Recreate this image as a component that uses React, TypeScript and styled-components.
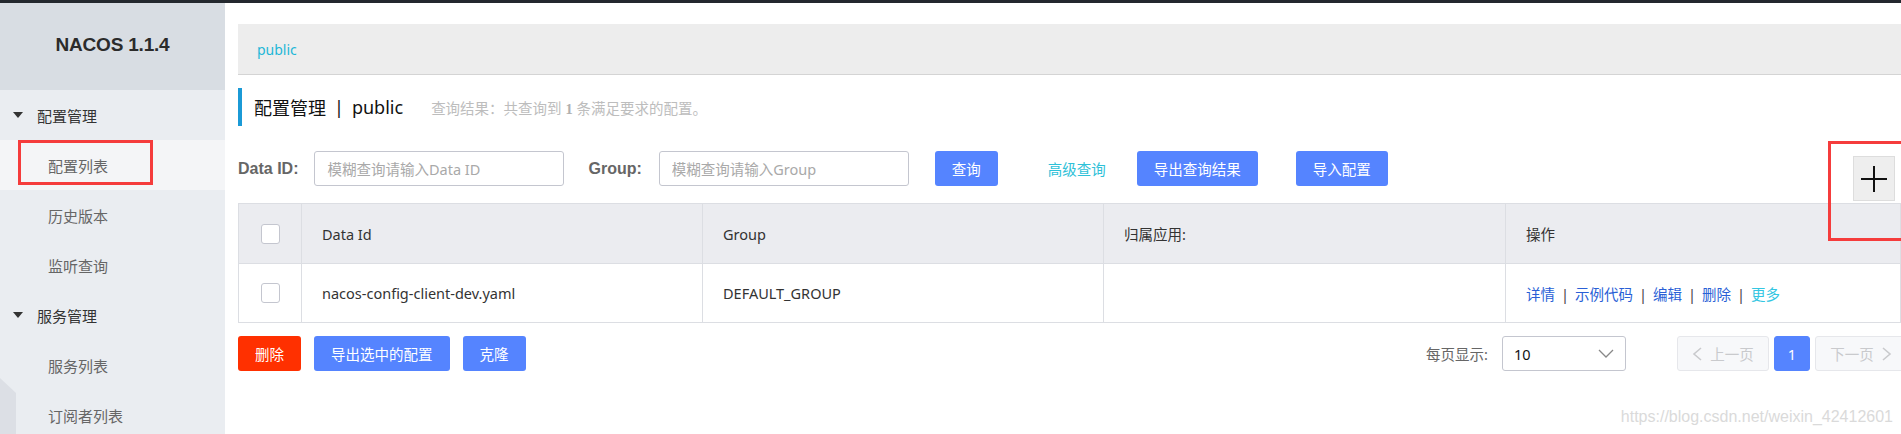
import styled, { createGlobalStyle } from "styled-components";

const GlobalStyle = createGlobalStyle`
  * { box-sizing: border-box; }
  html, body {
    margin: 0;
    padding: 0;
    width: 1901px;
    height: 434px;
    overflow: hidden;
    background: #fff;
  }
  body {
    font-family: "Noto Sans", "Noto Sans CJK SC", sans-serif;
    color: #333;
  }
`;

const subMenus = [
  { title: "配置管理", items: ["配置列表", "历史版本", "监听查询"] },
  { title: "服务管理", items: ["服务列表", "订阅者列表"] },
];

const columns = ["Data Id", "Group", "归属应用:", "操作"];

const actions = ["详情", "示例代码", "编辑", "删除"];

const App = () => {
  return (
    <Page>
      <GlobalStyle />
      <TopBar />
      <Body>
        <Sidebar>
          <SideHeader>NACOS 1.1.4</SideHeader>
          {subMenus.map((group) => (
            <div key={group.title}>
              <MenuGroup>
                <Caret />
                {group.title}
              </MenuGroup>
              {group.items.map((item) => (
                <MenuItem key={item} $active={item === "配置列表"}>
                  {item}
                  {item === "配置列表" && <MarkBox $w={135} $h={45} />}
                </MenuItem>
              ))}
            </div>
          ))}
          <CollapseTab />
        </Sidebar>

        <Main>
          <Breadcrumb>public</Breadcrumb>

          <TitleRow>
            <TitleText>配置管理</TitleText>
            <TitleSep>|</TitleSep>
            <TitleText>public</TitleText>
            <ResultText>
              查询结果：共查询到 <b>1</b> 条满足要求的配置。
            </ResultText>
          </TitleRow>

          <SearchRow>
            <FieldLabel>Data ID:</FieldLabel>
            <SearchInput $ml={16} placeholder="模糊查询请输入Data ID" />
            <FieldLabel $ml={24}>Group:</FieldLabel>
            <SearchInput $ml={17} placeholder="模糊查询请输入Group" />
            <Button $ml={26}>查询</Button>
            <TextLink $ml={50}>高级查询</TextLink>
            <Button $ml={31}>导出查询结果</Button>
            <Button $ml={38}>导入配置</Button>
          </SearchRow>

          <PlusButton>
            <svg width="26" height="26" viewBox="0 0 26 26">
              <line x1="13" y1="0" x2="13" y2="26" stroke="#111" strokeWidth="2" />
              <line x1="0" y1="13" x2="26" y2="13" stroke="#111" strokeWidth="2" />
            </svg>
          </PlusButton>
          <PlusMark />

          <Table>
            <colgroup>
              <col style={{ width: 63 }} />
              <col style={{ width: 401 }} />
              <col style={{ width: 401 }} />
              <col style={{ width: 402 }} />
              <col />
            </colgroup>
            <thead>
              <tr>
                <HeadCell $center>
                  <Checkbox />
                </HeadCell>
                {columns.map((c) => (
                  <HeadCell key={c}>{c}</HeadCell>
                ))}
              </tr>
            </thead>
            <tbody>
              <tr>
                <Cell $center>
                  <Checkbox />
                </Cell>
                <Cell>nacos-config-client-dev.yaml</Cell>
                <Cell>DEFAULT_GROUP</Cell>
                <Cell />
                <Cell>
                  {actions.map((a) => (
                    <span key={a}>
                      <ActionLink>{a}</ActionLink>
                      <ActionSep>|</ActionSep>
                    </span>
                  ))}
                  <ActionLink $more>更多</ActionLink>
                </Cell>
              </tr>
            </tbody>
          </Table>

          <Footer>
            <FooterLeft>
              <Button $variant="danger">删除</Button>
              <Button>导出选中的配置</Button>
              <Button>克隆</Button>
            </FooterLeft>
            <FooterRight>
              <PageSizeLabel>每页显示:</PageSizeLabel>
              <Select>
                <span>10</span>
                <svg width="16" height="9" viewBox="0 0 16 9">
                  <polyline points="1,1 8,8 15,1" fill="none" stroke="#888" strokeWidth="1.3" />
                </svg>
              </Select>
              <Pager>
                <PageButton $ml={51} $w={92} disabled>
                  <svg width="10" height="14" viewBox="0 0 10 14">
                    <polyline points="9,1 2,7 9,13" fill="none" stroke="#c9cacd" strokeWidth="1.6" />
                  </svg>
                  上一页
                </PageButton>
                <PageButton $ml={5} $w={36} $current>
                  1
                </PageButton>
                <PageButton $ml={5} $w={92} disabled>
                  下一页
                  <svg width="10" height="14" viewBox="0 0 10 14">
                    <polyline points="1,1 8,7 1,13" fill="none" stroke="#c9cacd" strokeWidth="1.6" />
                  </svg>
                </PageButton>
              </Pager>
            </FooterRight>
          </Footer>
        </Main>
      </Body>
      <Watermark>https://blog.csdn.net/weixin_42412601</Watermark>
    </Page>
  );
};

const Page = styled.div`
  position: relative;
  width: 1901px;
  height: 434px;
  display: flex;
  flex-direction: column;
  overflow: hidden;
`;

const TopBar = styled.div`
  height: 3px;
  background: #23282e;
  flex-shrink: 0;
`;

const Body = styled.div`
  flex: 1;
  display: flex;
  min-height: 0;
`;

const Sidebar = styled.aside`
  position: relative;
  width: 225px;
  flex-shrink: 0;
  background: #eaedf1;
  overflow: hidden;
`;

const SideHeader = styled.div`
  height: 87px;
  background: #d8dde3;
  display: flex;
  align-items: center;
  justify-content: center;
  padding-bottom: 3px;
  font-family: "Liberation Sans", Arial, sans-serif;
  font-weight: bold;
  font-size: 19px;
  letter-spacing: -0.2px;
  color: #2b2b2b;
`;

const MenuGroup = styled.div`
  height: 50px;
  display: flex;
  align-items: center;
  padding-left: 13px;
  font-size: 15px;
  color: #333;
`;

const Caret = styled.span`
  width: 0;
  height: 0;
  border-left: 5.5px solid transparent;
  border-right: 5.5px solid transparent;
  border-top: 6px solid #333;
  margin-right: 14px;
`;

const MenuItem = styled.div<{ $active?: boolean }>`
  position: relative;
  height: 50px;
  display: flex;
  align-items: center;
  padding-left: 48px;
  font-size: 15px;
  color: #666;
  background: ${({ $active }) => ($active ? "#f4f5f7" : "transparent")};
`;

const MarkBox = styled.span<{ $w: number; $h: number }>`
  position: absolute;
  left: 18px;
  top: 0;
  width: ${({ $w }) => $w}px;
  height: ${({ $h }) => $h}px;
  border: 3px solid #f53c3c;
`;

const CollapseTab = styled.div`
  position: absolute;
  left: 0;
  top: 375px;
  width: 16px;
  height: 80px;
  background: #dcdfe5;
  clip-path: polygon(0 0, 100% 15px, 100% 100%, 0 100%);
`;

const Main = styled.main`
  position: relative;
  flex: 1;
  min-width: 0;
  padding: 21px 0 0 13px;
`;

const Breadcrumb = styled.div`
  height: 51px;
  background: #ededed;
  border-bottom: 1px solid #d4d4d4;
  display: flex;
  align-items: center;
  padding-left: 19px;
  font-size: 14px;
  color: #1eb7d7;
`;

const TitleRow = styled.div`
  margin-top: 13px;
  height: 38px;
  border-left: 4px solid #1b9ad6;
  display: flex;
  align-items: center;
  padding-left: 12px;
`;

const TitleText = styled.span`
  font-size: 18px;
  color: #111;
`;

const TitleSep = styled.span`
  font-size: 18px;
  color: #111;
  margin: 0 8px;
`;

const ResultText = styled.span`
  margin-left: 28px;
  font-size: 14.5px;
  color: #bdbdbd;
  b {
    font-family: "Liberation Serif", serif;
    color: #b0b0b0;
  }
`;

const SearchRow = styled.div`
  margin-top: 25px;
  height: 35px;
  display: flex;
  align-items: center;
`;

const FieldLabel = styled.label<{ $ml?: number }>`
  margin-left: ${({ $ml }) => $ml ?? 0}px;
  font-family: "Liberation Sans", Arial, sans-serif;
  font-weight: bold;
  font-size: 16px;
  color: #666;
`;

const SearchInput = styled.input<{ $ml?: number }>`
  margin-left: ${({ $ml }) => $ml ?? 0}px;
  width: 250px;
  height: 35px;
  border: 1px solid #c4c6cf;
  border-radius: 3px;
  padding: 0 12px;
  font-family: inherit;
  font-size: 14.5px;
  color: #333;
  outline: none;
  &::placeholder {
    color: #a9a9a9;
  }
`;

const Button = styled.button<{ $ml?: number; $variant?: "danger" }>`
  margin-left: ${({ $ml }) => $ml ?? 0}px;
  height: 35px;
  padding: 0 17px;
  border: none;
  border-radius: 3px;
  background: ${({ $variant }) => ($variant === "danger" ? "#ff3000" : "#5584ff")};
  color: #fff;
  font-family: inherit;
  font-size: 14.5px;
  cursor: pointer;
`;

const TextLink = styled.a<{ $ml?: number }>`
  margin-left: ${({ $ml }) => $ml ?? 0}px;
  font-size: 14.5px;
  color: #2ec1d8;
  cursor: pointer;
`;

const PlusButton = styled.div`
  position: absolute;
  top: 153px;
  right: 6px;
  width: 42px;
  height: 45px;
  background: #eeeeee;
  border: 1px solid #dddddd;
  display: flex;
  align-items: center;
  justify-content: center;
`;

const PlusMark = styled.div`
  position: absolute;
  top: 138px;
  right: -4px;
  width: 77px;
  height: 100px;
  border: 3px solid #f53c3c;
`;

const Table = styled.table`
  margin-top: 17px;
  width: 100%;
  table-layout: fixed;
  border-collapse: collapse;
  border: 1px solid #dcdee3;
  font-size: 14.5px;
`;

const HeadCell = styled.th<{ $center?: boolean }>`
  height: 60px;
  padding: 0 ${({ $center }) => ($center ? 0 : 20)}px;
  background: #ebecf0;
  border: 1px solid #dcdee3;
  font-weight: normal;
  color: #333;
  text-align: ${({ $center }) => ($center ? "center" : "left")};
  vertical-align: middle;
`;

const Cell = styled.td<{ $center?: boolean }>`
  height: 59px;
  padding: 0 ${({ $center }) => ($center ? 0 : 20)}px;
  border: 1px solid #dcdee3;
  color: #333;
  text-align: ${({ $center }) => ($center ? "center" : "left")};
  vertical-align: middle;
`;

const Checkbox = styled.span`
  display: inline-block;
  width: 19px;
  height: 20px;
  margin-top: -4px;
  background: #fff;
  border: 1px solid #c4c6cf;
  border-radius: 3px;
  vertical-align: middle;
`;

const ActionLink = styled.a<{ $more?: boolean }>`
  color: ${({ $more }) => ($more ? "#33c6e2" : "#2a5fd6")};
  cursor: pointer;
`;

const ActionSep = styled.span`
  margin: 0 6px;
  color: #444;
`;

const Footer = styled.div`
  margin-top: 13px;
  margin-right: -6px;
  height: 35px;
  display: flex;
  align-items: center;
  justify-content: space-between;
`;

const FooterLeft = styled.div`
  display: flex;
  gap: 13px;
`;

const FooterRight = styled.div`
  display: flex;
  align-items: center;
`;

const PageSizeLabel = styled.span`
  font-size: 14.5px;
  color: #666;
  margin-right: 14px;
`;

const Select = styled.div`
  width: 124px;
  height: 35px;
  border: 1px solid #c4c6cf;
  border-radius: 3px;
  display: flex;
  align-items: center;
  justify-content: space-between;
  padding: 0 11px 0 11px;
  font-size: 14.5px;
  color: #111;
`;

const Pager = styled.div`
  display: flex;
  align-items: center;
`;

const PageButton = styled.button<{ $ml?: number; $w: number; $current?: boolean }>`
  margin-left: ${({ $ml }) => $ml ?? 0}px;
  width: ${({ $w }) => $w}px;
  height: 35px;
  display: flex;
  align-items: center;
  justify-content: center;
  gap: 8px;
  border-radius: 3px;
  border: 1px solid ${({ $current }) => ($current ? "#5584ff" : "#e6e7eb")};
  background: ${({ $current }) => ($current ? "#5584ff" : "#f7f8fa")};
  color: ${({ $current }) => ($current ? "#fff" : "#c9cacd")};
  font-family: inherit;
  font-size: 14.5px;
  padding: 0;
`;

const Watermark = styled.div`
  position: absolute;
  right: 8px;
  bottom: 8px;
  font-family: "Liberation Sans", Arial, sans-serif;
  font-size: 16px;
  line-height: 18px;
  color: #dadada;
  pointer-events: none;
`;

export default App;
